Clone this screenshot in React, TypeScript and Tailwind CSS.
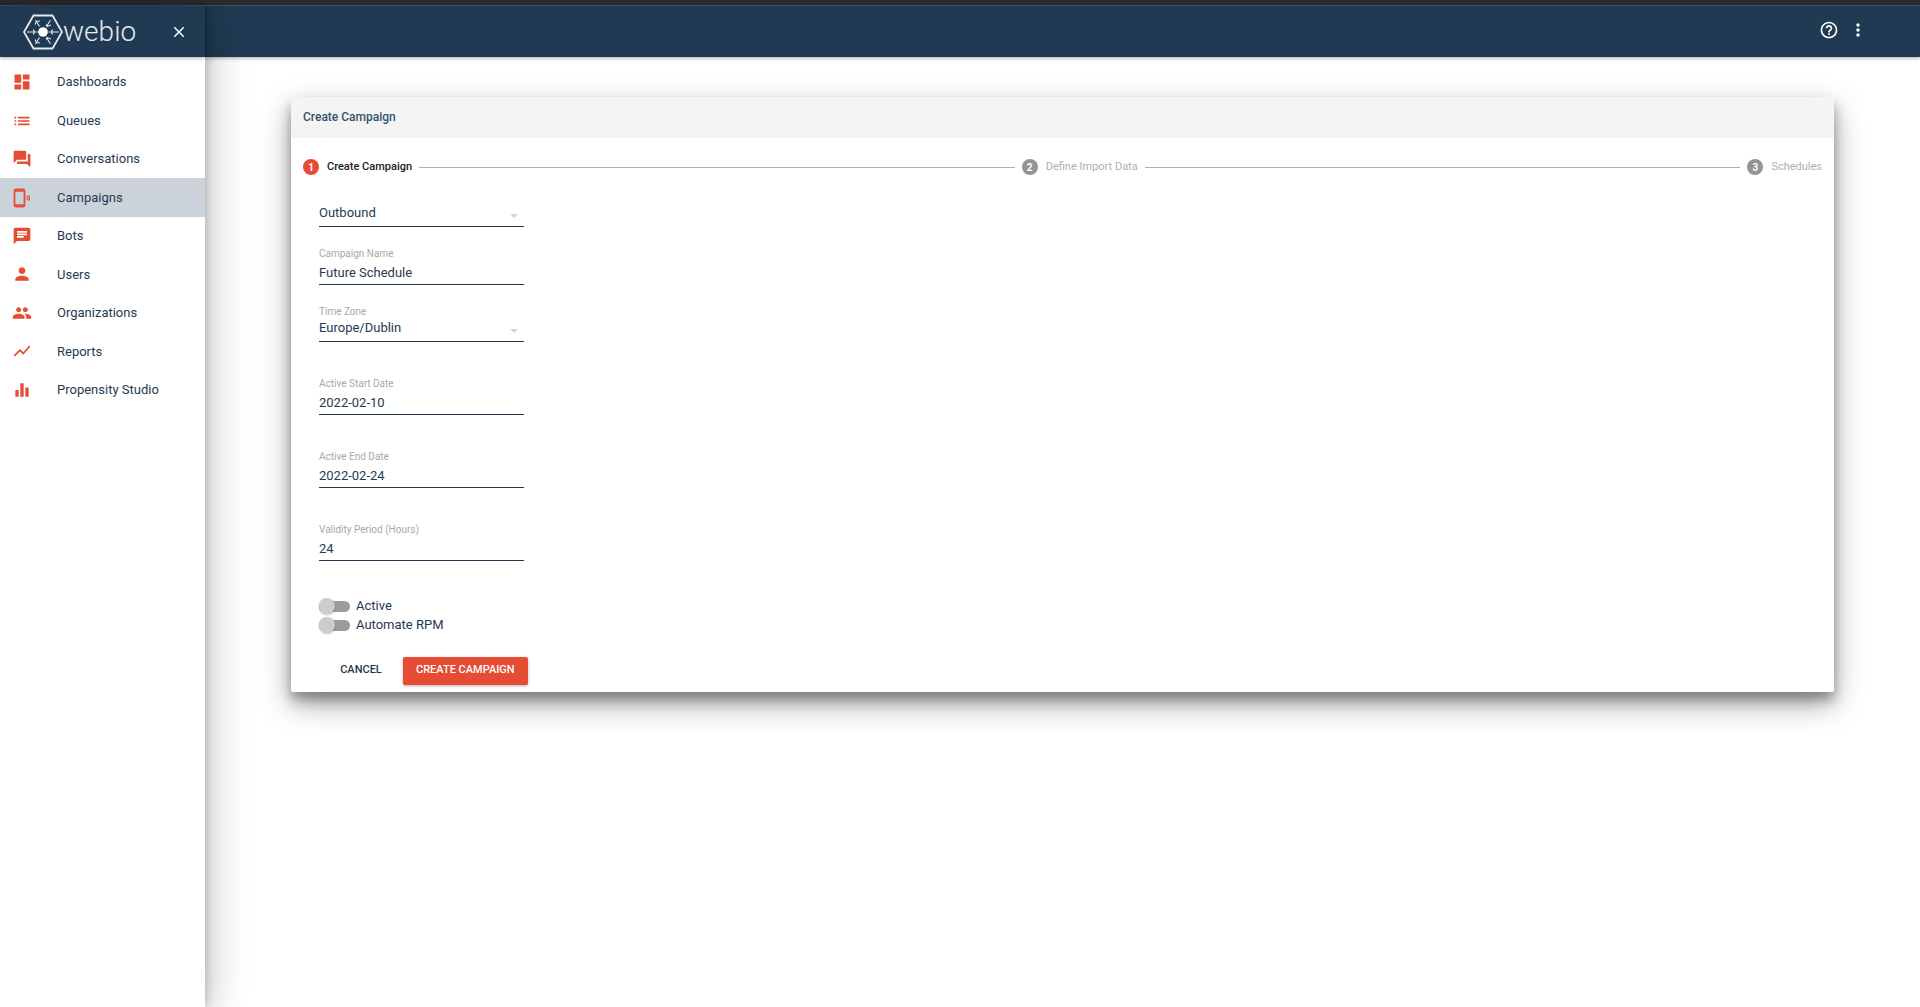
import React, { useState } from "react";
import {
  MdChat,
  MdClose,
  MdDashboard,
  MdEqualizer,
  MdForum,
  MdHelpOutline,
  MdList,
  MdMoreVert,
  MdPeople,
  MdPerson,
  MdShowChart,
} from "react-icons/md";

function CampaignIcon({ className }: { className?: string }) {
  return (
    <svg viewBox="0 0 20 20" fill="none" stroke="currentColor" className={className}>
      <rect x="2.5" y="1.5" width="10" height="17" rx="1.5" strokeWidth="1.8" />
      <path d="M3 3h9M3 17h9" strokeWidth="1.5" />
      <path d="M15.500 8q-1.400 2 0 4M16.500 7.200q2 2.800 0 5.600" strokeWidth="1.1" />
    </svg>
  );
}

function Logo() {
  return (
    <a href="#" className="flex items-center text-[#e4e9ee]">
      <svg viewBox="0 0 40 36" fill="none" stroke="currentColor" className="h-9 w-10">
        <path d="M1 18 10.5 1.5h19L39 18l-9.500 16.500h-19z" strokeWidth="1.8" />
        <path
          d="M4 18h8M28 18h8M12.500 6l4 6.500M27.500 6l-4 6.500M12.500 30l4-6.500M27.500 30l-4-6.500M10 15.500l2 2.500-2 2.500M30 15.500 28 18l2 2.500M12 10.500l1.500-3 3.500-.5M23 10.500l1 2 4-1.500M12 25.500l1.500 3 3.500.5M23 25.500l1-2 4 1.500"
          strokeWidth="1.1"
        />
        <path d="M12 18h16" strokeWidth="0.6" />
        <circle cx="20" cy="18" r="4.800" fill="#fff" stroke="none" />
      </svg>
      <span className="text-[28px] leading-9 font-light">webio</span>
    </a>
  );
}

const navItems = [
  { label: "Dashboards", icon: MdDashboard },
  { label: "Queues", icon: MdList },
  { label: "Conversations", icon: MdForum },
  { label: "Campaigns", icon: CampaignIcon },
  { label: "Bots", icon: MdChat },
  { label: "Users", icon: MdPerson },
  { label: "Organizations", icon: MdPeople },
  { label: "Reports", icon: MdShowChart },
  { label: "Propensity Studio", icon: MdEqualizer },
];

function Sidebar() {
  return (
    <aside className="relative z-10 w-[205px] shrink-0 bg-white shadow-[0_0_10px_rgba(0,0,0,0.2),0_8px_40px_rgba(0,0,0,0.3)]">
      <div className="flex h-[51px] items-center justify-between bg-[#1f3a52] pr-[17px] pl-[23px] text-white shadow-[0_1px_4px_rgba(0,0,0,0.35)]">
        <Logo />
        <button type="button" aria-label="Close menu">
          <MdClose className="size-[18px]" />
        </button>
      </div>
      <nav className="mt-1.5 grid h-[346px] grid-rows-9">
        {navItems.map(({ label, icon: Icon }) => (
          <a
            key={label}
            href="#"
            className={`flex items-center gap-[25px] pl-3 text-[13px] ${
              label === "Campaigns" ? "bg-[#cbd2d9]" : ""
            }`}
          >
            <Icon className="size-5 text-[#e54c33]" />
            {label}
          </a>
        ))}
      </nav>
    </aside>
  );
}

function Step({ number, label, active }: { number: number; label: string; active?: boolean }) {
  return (
    <li
      className={`flex items-center gap-2 text-[11px] ${
        active ? "font-medium text-[#212121]" : "text-[#afafaf]"
      }`}
    >
      <span
        className={`flex size-4 items-center justify-center rounded-full text-[10px] font-bold text-white ${
          active ? "bg-[#e54c33]" : "bg-[#949494]"
        }`}
      >
        {number}
      </span>
      {label}
    </li>
  );
}

function StepLine() {
  return <li aria-hidden="true" className="h-px flex-1 bg-[#b0b0b0]" />;
}

interface FieldProps {
  id: string;
  label: string;
  value: string;
  onChange: (value: string) => void;
}

function TextField({ id, label, value, onChange }: FieldProps) {
  return (
    <div className="flex flex-col">
      <label htmlFor={id} className="text-[10px] leading-3 text-[#a8a8a8]">
        {label}
      </label>
      <input
        id={id}
        value={value}
        onChange={(e) => onChange(e.target.value)}
        className="mt-1 h-[21px] border-b border-[#1f3a52] pb-0.5 text-[13px] outline-none"
      />
    </div>
  );
}

function SelectField({ id, label, value, onChange, options, hideLabel }: FieldProps & { options: string[]; hideLabel?: boolean }) {
  return (
    <div className="flex flex-col">
      {!hideLabel && (
        <label htmlFor={id} className="text-[10px] leading-3 text-[#a8a8a8]">
          {label}
        </label>
      )}
      <div className="relative">
        <select
          id={id}
          aria-label={label}
          value={value}
          onChange={(e) => onChange(e.target.value)}
          className="block h-6 w-full appearance-none border-b border-[#1f3a52] pb-1 text-[13px] outline-none"
        >
          {options.map((option) => (
            <option key={option}>{option}</option>
          ))}
        </select>
        <span className="pointer-events-none absolute top-[11px] right-[6px] border-x-4 border-t-4 border-x-transparent border-t-[#d4d4d4]" />
      </div>
    </div>
  );
}

function Toggle({ label }: { label: string }) {
  const [on, setOn] = useState(false);

  return (
    <label className="flex h-[19px] cursor-pointer items-center gap-1.5 text-[13px]">
      <input
        type="checkbox"
        checked={on}
        onChange={() => setOn(!on)}
        className="h-[11px] w-[31px] appearance-none rounded-full bg-[#9c9c9c] before:-mt-[3px] before:block before:size-4 before:rounded-full before:bg-[#cdcdcd] before:shadow-[0_1px_2px_rgba(0,0,0,0.25)] checked:bg-[#f0a699] checked:before:ml-[15px] checked:before:bg-[#e54c33]"
      />
      {label}
    </label>
  );
}

function CampaignForm() {
  const [direction, setDirection] = useState("Outbound");
  const [name, setName] = useState("Future Schedule");
  const [timeZone, setTimeZone] = useState("Europe/Dublin");
  const [startDate, setStartDate] = useState("2022-02-10");
  const [endDate, setEndDate] = useState("2022-02-24");
  const [validity, setValidity] = useState("24");

  return (
    <form onSubmit={(e) => e.preventDefault()} className="px-7 pt-[27px] pb-[7px]">
      <div className="flex w-[205px] flex-col">
        <SelectField id="direction" label="Direction" value={direction} onChange={setDirection} options={["Outbound", "Inbound"]} hideLabel />
        <div className="mt-[21px]">
          <TextField id="name" label="Campaign Name" value={name} onChange={setName} />
        </div>
        <div className="mt-[21px]">
          <SelectField id="timezone" label="Time Zone" value={timeZone} onChange={setTimeZone} options={["Europe/Dublin", "Europe/London"]} />
        </div>
        <div className="mt-9 flex flex-col gap-9">
          <TextField id="start" label="Active Start Date" value={startDate} onChange={setStartDate} />
          <TextField id="end" label="Active End Date" value={endDate} onChange={setEndDate} />
          <TextField id="validity" label="Validity Period (Hours)" value={validity} onChange={setValidity} />
        </div>
      </div>
      <div className="mt-9 flex flex-col">
        <Toggle label="Active" />
        <Toggle label="Automate RPM" />
      </div>
      <div className="mt-[22px] flex items-center">
        <button type="button" className="h-7 w-[84px] text-[11px] font-medium">
          CANCEL
        </button>
        <button
          type="submit"
          className="h-7 rounded-[2px] bg-[#e54c33] px-[13px] text-[11px] font-medium text-white shadow-[0_1px_3px_rgba(0,0,0,0.3)]"
        >
          CREATE CAMPAIGN
        </button>
      </div>
    </form>
  );
}

export default function App() {
  return (
    <div className="flex min-h-screen flex-col bg-white font-['Roboto',sans-serif] text-[#1f3a52]">
      <div className="h-1.5 border-b border-[#55575a] bg-[#2b2c30]" />
      <div className="flex flex-1">
        <Sidebar />
        <div className="flex-1">
          <header className="flex h-[51px] items-center justify-end gap-[9px] bg-[#1f3a52] pr-[52px] pb-[3px] text-white shadow-[0_1px_4px_rgba(0,0,0,0.35)]">
            <button type="button" aria-label="Help">
              <MdHelpOutline className="size-5" />
            </button>
            <button type="button" aria-label="More options">
              <MdMoreVert className="size-5" />
            </button>
          </header>
          <main className="px-[86px] pt-10">
            <section className="rounded-[2px] bg-white shadow-[0_8px_12px_rgba(0,0,0,0.3),0_12px_30px_rgba(0,0,0,0.35)]">
              <h1 className="h-[41px] rounded-t-[2px] bg-[#f4f4f4] px-3 text-xs leading-[41px] font-medium text-[#36526b]">
                Create Campaign
              </h1>
              <ol className="flex items-center gap-[7px] px-3 pt-[21px]">
                <Step number={1} label="Create Campaign" active />
                <StepLine />
                <Step number={2} label="Define Import Data" />
                <StepLine />
                <Step number={3} label="Schedules" />
              </ol>
              <CampaignForm />
            </section>
          </main>
        </div>
      </div>
    </div>
  );
}
